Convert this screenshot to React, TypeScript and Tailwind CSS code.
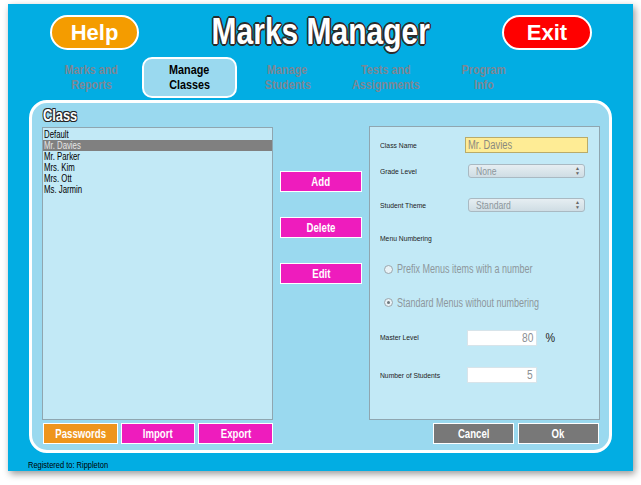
import React from 'react';

const font = "font-['Liberation_Sans',Arial,sans-serif]";
const outline =
  '[text-shadow:-1px_-1px_0_#2b2b2b,1px_-1px_0_#2b2b2b,-1px_1px_0_#2b2b2b,1px_1px_0_#2b2b2b,0_2px_0_#2b2b2b,2px_0_0_#2b2b2b,-2px_0_0_#2b2b2b,0_-2px_0_#2b2b2b]';

const classes = ['Default', 'Mr. Davies', 'Mr. Parker', 'Mrs. Kim', 'Mrs. Ott', 'Ms. Jarmin'];

const tabs = [
  { top: 'Marks and', bottom: 'Reports' },
  { top: 'Manage', bottom: 'Classes', active: true },
  { top: 'Manage', bottom: 'Students' },
  { top: 'Tests and', bottom: 'Assignments' },
  { top: 'Program', bottom: 'Info' },
];

// condensed text: the app uses a narrow Helvetica, so squeeze Liberation Sans
function N({ children, className = '' }: { children: React.ReactNode; className?: string }) {
  return <span className={`inline-block whitespace-nowrap ${font} ${className}`}>{children}</span>;
}

function Btn({ label, color, w }: { label: string; color: string; w: string }) {
  return (
    <div className={`${w} h-[21px] ${color} border-[1.5px] border-white flex items-center justify-center`}>
      <N className="text-white font-bold text-[12px] scale-x-[0.8]">{label}</N>
    </div>
  );
}

function Select({ value }: { value: string }) {
  return (
    <div className="w-[117px] h-[14px] rounded-[3px] border border-[#a9b9c2] bg-gradient-to-b from-[#e6eef2] to-[#cfdde4] flex items-center justify-between pl-[7px] pr-[4px]">
      <N className="text-[11px] text-[#8c969c] scale-x-[0.78] origin-left">{value}</N>
      <span className="flex flex-col leading-none text-[5px] text-[#666]">
        <span>▲</span>
        <span>▼</span>
      </span>
    </div>
  );
}

function Label({ text }: { text: string }) {
  return (
    <div className="w-[95px] pl-[10px] flex items-center">
      <N className="text-[7.5px] leading-[9px] text-[#222] scale-x-[0.9] origin-left">{text}</N>
    </div>
  );
}

function Radio({ text, checked }: { text: string; checked?: boolean }) {
  return (
    <div className="flex items-center pl-[14px] gap-[4px]">
      <span className="w-[9px] h-[9px] rounded-full border border-[#9aa6ad] bg-[#e8f2f6] flex items-center justify-center">
        {checked && <span className="w-[3px] h-[3px] rounded-full bg-[#6d777d]" />}
      </span>
      <N className="text-[12px] text-[#8d979c] scale-x-[0.75] origin-left">{text}</N>
    </div>
  );
}

function NumBox({ value }: { value: string }) {
  return (
    <div className="ml-[2px] w-[70px] h-[16px] bg-white border border-[#d8e4ea] flex items-center justify-end pr-[3px]">
      <N className="text-[12px] text-[#8a8f93] scale-x-[0.85] origin-right">{value}</N>
    </div>
  );
}

export default function App() {
  return (
    <div className="w-[641px] h-[485px] bg-white pt-[4px] pl-[8px]">
      <div className="w-[625px] h-[467px] bg-[#02ade3] shadow-[2px_3px_7px_rgba(0,0,0,0.4)] flex flex-col">
        {/* header */}
        <div className="h-[53px] flex items-start justify-between pl-[42px] pr-[41px] pt-[11px]">
          <div className="w-[89px] h-[35px] rounded-full bg-[#f49c00] border-2 border-white flex items-center justify-center">
            <span className={`text-white font-bold text-[22px] leading-none ${font}`}>Help</span>
          </div>
          <div className="w-[268px] flex justify-center mt-[-2px]">
            <N className={`text-white font-bold text-[37px] leading-none scale-x-[0.81] ${outline}`}>Marks Manager</N>
          </div>
          <div className="w-[90px] h-[35px] rounded-full bg-[#ff0000] border-2 border-white flex items-center justify-center">
            <span className={`text-white font-bold text-[22px] leading-none ${font}`}>Exit</span>
          </div>
        </div>

        {/* tabs */}
        <div className="h-[44px] flex gap-[3px] pl-[36px]">
          {tabs.map((t, i) => (
            <div
              key={i}
              className={`w-[95px] h-[41px] flex flex-col items-center justify-center leading-[15px] font-bold text-[13px] ${
                t.active
                  ? 'bg-[#9ad9ef] border-[2.5px] border-white rounded-[10px] text-black'
                  : 'text-[#7d8794]'
              }`}
            >
              <N className="scale-x-[0.83]">{t.top}</N>
              <N className="scale-x-[0.83]">{t.bottom}</N>
            </div>
          ))}
        </div>

        {/* main panel */}
        <div className="ml-[21px] w-[583px] h-[356px] bg-[#9ad9ef] border-[3px] border-white rounded-[18px] flex pl-[10px]">
          {/* left column */}
          <div className="w-[231px] flex flex-col">
            <div className="h-[24px] pt-[3px] pl-[1px] leading-[18px]">
              <N
                className={`text-white font-bold text-[16px] scale-x-[0.8] origin-left [text-shadow:-1px_-1px_0_#222,1px_-1px_0_#222,-1px_1px_0_#222,1px_1px_0_#222]`}
              >
                Class
              </N>
            </div>
            <div className="h-[293px] bg-[#c2e9f6] border border-[#8fa6b0] pt-[1px]">
              {classes.map((c, i) => (
                <div
                  key={c}
                  className={`h-[11px] leading-[11px] pl-[1px] text-[10px] ${
                    i === 1 ? 'bg-[#808080] text-[#e6e6e6]' : 'text-black'
                  }`}
                >
                  <N className="scale-x-[0.78] origin-left">{c}</N>
                </div>
              ))}
            </div>
            <div className="flex gap-[3px] mt-[3px] pl-[1px]">
              <Btn label="Passwords" color="bg-[#ee951d]" w="w-[75px]" />
              <Btn label="Import" color="bg-[#ee1cbd]" w="w-[75px]" />
              <Btn label="Export" color="bg-[#ee1cbd]" w="w-[75px]" />
            </div>
          </div>

          {/* middle buttons */}
          <div className="ml-[7px] w-[82px] flex flex-col gap-[25px] pt-[68px]">
            <Btn label="Add" color="bg-[#ee1cbd]" w="w-[82px]" />
            <Btn label="Delete" color="bg-[#ee1cbd]" w="w-[82px]" />
            <Btn label="Edit" color="bg-[#ee1cbd]" w="w-[82px]" />
          </div>

          {/* right column */}
          <div className="ml-[7px] w-[231px] flex flex-col pt-[23px]">
            <div className="h-[294px] bg-[#c2e9f6] border border-[#8fa6b0] flex flex-col pt-[7px]">
              <div className="h-[22px] flex items-center">
                <Label text="Class Name" />
                <div className="w-[123px] h-[16px] bg-[#feec95] border border-[#b9ab6a] flex items-center pl-[2px]">
                  <N className="text-[12px] text-[#8a8a80] scale-x-[0.78] origin-left">Mr. Davies</N>
                </div>
              </div>
              <div className="h-[30px] flex items-center">
                <Label text="Grade Level" />
                <div className="ml-[3px]">
                  <Select value="None" />
                </div>
              </div>
              <div className="h-[38px] flex items-center">
                <Label text="Student Theme" />
                <div className="ml-[3px]">
                  <Select value="Standard" />
                </div>
              </div>
              <div className="h-[28px] flex items-center">
                <Label text="Menu Numbering" />
              </div>
              <div className="h-[34px] flex items-center">
                <Radio text="Prefix Menus items with a number" />
              </div>
              <div className="h-[33px] flex items-center">
                <Radio text="Standard Menus without numbering" checked />
              </div>
              <div className="h-[37px] flex items-center">
                <Label text="Master Level" />
                <NumBox value="80" />
                <N className="ml-[8px] text-[12px] text-[#222] scale-x-[0.9]">%</N>
              </div>
              <div className="h-[38px] flex items-center">
                <Label text="Number of Students" />
                <NumBox value="5" />
              </div>
            </div>
            <div className="flex justify-end gap-[4px] mt-[3px] pr-[1px]">
              <Btn label="Cancel" color="bg-[#787878]" w="w-[81px]" />
              <Btn label="Ok" color="bg-[#787878]" w="w-[81px]" />
            </div>
          </div>
        </div>

        {/* footer */}
        <div className="pl-[20px] pt-[3px] leading-[12px]">
          <N className="text-[9px] text-black scale-x-[0.83] origin-left">Registered to: Rippleton</N>
        </div>
      </div>
    </div>
  );
}
